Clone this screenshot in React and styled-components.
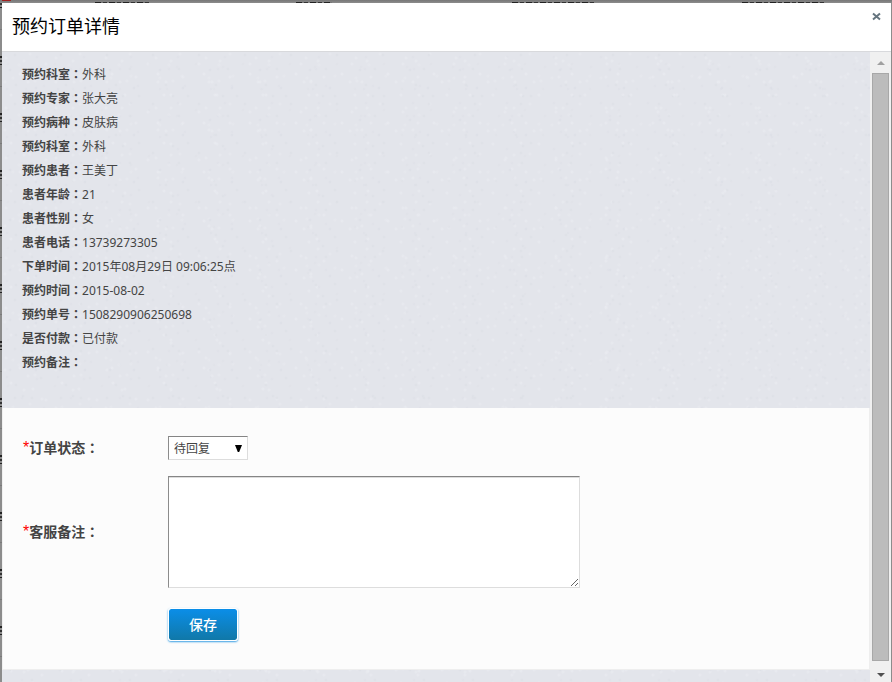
import React, { useState } from 'react';
import styled, { createGlobalStyle } from 'styled-components';

const GlobalStyle = createGlobalStyle`
  * {
    box-sizing: border-box;
  }

  body {
    margin: 0;
    color: #444;
    font-family: "Noto Sans", "Noto Sans CJK SC", sans-serif;
    font-size: 12px;
    line-height: 24px;
  }
`;

const Backdrop = styled.div`
  display: flex;
  height: 100vh;
  padding: 3px 1px 0 2px;
  background-color: #8c8c8c;
  background-image:
    linear-gradient(#a02020, #a02020),
    repeating-linear-gradient(90deg, #222 0 6px, #777 6px 8px, #333 8px 12px, #888 12px 14px),
    repeating-linear-gradient(90deg, #222 0 6px, #777 6px 8px, #333 8px 12px, #888 12px 14px),
    repeating-linear-gradient(90deg, #222 0 6px, #777 6px 8px, #333 8px 12px, #888 12px 14px),
    repeating-linear-gradient(90deg, #222 0 6px, #777 6px 8px, #333 8px 12px, #888 12px 14px),
    linear-gradient(#777, #8c8c8c),
    linear-gradient(#8c8c8c 0 4px, #222 4px 6px, #8c8c8c 6px 8px, #333 8px 10px, #8c8c8c 10px 12px, #222 12px 13px, #8c8c8c 13px 34px, #7a7a7a 34px 35px, #8c8c8c 35px);
  background-repeat: no-repeat, no-repeat, no-repeat, no-repeat, no-repeat, no-repeat, repeat-y;
  background-size: 9px 1px, 56px 1px, 36px 1px, 82px 1px, 82px 1px, 100% 3px, 2px 57px;
  background-position: 2px 0, 95px 2px, 296px 2px, 512px 2px, 742px 2px, 0 0, 0 52px;
`;

const Dialog = styled.section`
  flex: 1;
  min-width: 0;
  display: flex;
  flex-direction: column;
  background: #fff;
`;

const DialogHeader = styled.header`
  display: flex;
  justify-content: space-between;
  align-items: flex-start;
  padding: 0 6px 2px 10px;
  border-bottom: 1px solid #d8d9dc;
`;

const Title = styled.h1`
  margin: 0;
  color: #000;
  font-size: 18px;
  font-weight: 400;
  line-height: 46px;
`;

const CloseButton = styled.button`
  display: flex;
  margin-top: 5px;
  padding: 4px;
  border: none;
  background: none;
  cursor: pointer;
`;

const DialogBody = styled.div`
  flex: 1;
  min-height: 0;
  display: flex;
`;

// paper-like grain: faint light and dark specks on tiles of about 50px
const specks = [
  [4, 6, '#e9ebf0'], [13, 3, '#dde0e6'], [22, 9, '#e9ebf0'], [35, 5, '#dfe1e8'],
  [44, 12, '#e9ebf0'], [8, 18, '#dcdfe6'], [18, 22, '#eaecf1'], [30, 17, '#dde0e6'],
  [40, 25, '#e9ebf0'], [3, 30, '#e9ebf0'], [14, 33, '#dde0e6'], [26, 30, '#e9ebf0'],
  [34, 36, '#dcdfe6'], [42, 34, '#dfe1e8'], [9, 43, '#eaecf1'], [21, 44, '#dde0e6'],
  [31, 43, '#e9ebf0'], [39, 44, '#dde0e6'], [6, 12, '#e0e2e8'], [27, 24, '#e7e9ee'],
  [17, 13, '#e7e9ee'], [37, 15, '#e0e2e8'], [11, 26, '#e7e9ee'], [24, 37, '#e0e2e8'],
  [5, 37, '#dfe1e8'], [28, 2, '#e8eaef'], [33, 29, '#e8eaef'], [20, 17, '#dfe1e8'],
].map(([x, y, color]) => `radial-gradient(circle at ${x}px ${y}px, ${color}, transparent 2px)`);

const Content = styled.div`
  flex: 1;
  min-width: 0;
  overflow-y: auto;
  scrollbar-width: none;
  background-color: #e3e5eb;
  background-image: ${specks.join(', ')};
  background-size: 50px 50px, 46px 49px, 49px 47px, 47px 46px, 51px 48px;
`;

const Details = styled.dl`
  margin: 0;
  padding: 11px 20px 33px;
`;

const DetailRow = styled.div`
  display: flex;
  height: 24px;
`;

const DetailLabel = styled.dt`
  font-weight: 700;
`;

const DetailValue = styled.dd`
  margin: 0;
`;

// this face centres the fullwidth colon in its cell
const Colon = styled.span`
  font-family: "Noto Sans CJK TC", sans-serif;
  line-height: 1;
`;

const Form = styled.form`
  display: grid;
  grid-template-columns: 145px 1fr;
  row-gap: 16px;
  align-items: center;
  justify-items: start;
  padding: 28px 20px;
  border-left: 1px solid #f0f0f0;
  border-right: 1px solid #eee;
  border-bottom: 1px solid #eee;
  background: #fcfcfc;
`;

const FieldLabel = styled.label`
  font-size: 14px;
  font-weight: 700;
`;

const Required = styled.span`
  color: #f00;
  font-family: "Liberation Sans", sans-serif;
  font-size: 16px;
  font-weight: 400;
  line-height: 1;
`;

const SelectBox = styled.div`
  display: grid;
  align-items: center;

  > * {
    grid-area: 1 / 1;
  }

  svg {
    justify-self: end;
    margin-right: 6px;
    pointer-events: none;
  }
`;

const Select = styled.select`
  appearance: none;
  width: 80px;
  height: 24px;
  padding: 0 5px;
  border: 1px solid;
  border-color: #858585 #ddd #ddd #8c8c8c;
  border-radius: 0;
  background: #fff;
  color: #444;
  font: inherit;
`;

const TextArea = styled.textarea`
  display: block;
  width: 412px;
  max-width: 100%;
  height: 112px;
  padding: 4px;
  border: 1px solid;
  border-color: #858585 #ddd #ddd #8c8c8c;
  background: #fff;
  box-shadow: inset 0 1px 0 #ddd;
  color: #444;
  font: inherit;
  resize: both;
`;

const SaveButton = styled.button`
  grid-column: 2;
  margin-top: 4px;
  width: 70px;
  height: 33px;
  padding: 0 0 2px;
  border: 1px solid #fff;
  border-radius: 3px;
  background: linear-gradient(#0b8ee8, #1078a8) padding-box;
  box-shadow: 0 1px 2px #3a9fe4;
  color: #fff;
  font-family: inherit;
  font-size: 14px;
  font-weight: 500;
  cursor: pointer;
`;

const ScrollBar = styled.div`
  display: flex;
  flex-direction: column;
  width: 21px;
  padding: 0 2px;
  background: #f0f0f0;
`;

const ScrollArrow = styled.button`
  display: flex;
  align-items: ${props => props.$align || 'center'};
  justify-content: center;
  height: 21px;
  padding: 5px 0;
  border: none;
  background: none;
`;

const ScrollThumb = styled.div`
  flex: 1;
  border: 1px solid #a8a8a8;
  background: #bcbcbc;
`;

const details = [
  ['预约科室', '外科'],
  ['预约专家', '张大亮'],
  ['预约病种', '皮肤病'],
  ['预约科室', '外科'],
  ['预约患者', '王美丁'],
  ['患者年龄', '21'],
  ['患者性别', '女'],
  ['患者电话', '13739273305'],
  ['下单时间', '2015年08月29日 09:06:25点'],
  ['预约时间', '2015-08-02'],
  ['预约单号', '1508290906250698'],
  ['是否付款', '已付款'],
  ['预约备注', ''],
];

const App = () => {
  const [status, setStatus] = useState('pending');
  const [remark, setRemark] = useState('');

  return (
    <>
      <GlobalStyle />
      <Backdrop>
        <Dialog role="dialog" aria-labelledby="dialog-title">
          <DialogHeader>
            <Title id="dialog-title">预约订单详情</Title>
            <CloseButton type="button" aria-label="关闭">
              <svg width="9" height="9" viewBox="0 0 9 9">
                <path d="M1 1.5 L8 7.5 M8 1.5 L1 7.5" stroke="#66757f" strokeWidth="2" />
              </svg>
            </CloseButton>
          </DialogHeader>

          <DialogBody>
            <Content>
              <Details>
                {details.map(([label, value], index) => (
                  <DetailRow key={index}>
                    <DetailLabel>{label}<Colon>：</Colon></DetailLabel>
                    <DetailValue>{value}</DetailValue>
                  </DetailRow>
                ))}
              </Details>

              <Form onSubmit={(e) => e.preventDefault()}>
                <FieldLabel htmlFor="status">
                  <Required>*</Required>订单状态<Colon>：</Colon>
                </FieldLabel>
                <SelectBox>
                  <Select id="status" value={status} onChange={(e) => setStatus(e.target.value)}>
                    <option value="pending">待回复</option>
                    <option value="replied">已回复</option>
                  </Select>
                  <svg width="7" height="7" viewBox="0 0 7 7">
                    <path d="M0 0 H7 L4.2 7 H2.8 Z" fill="#000" />
                  </svg>
                </SelectBox>

                <FieldLabel htmlFor="remark">
                  <Required>*</Required>客服备注<Colon>：</Colon>
                </FieldLabel>
                <TextArea id="remark" value={remark} onChange={(e) => setRemark(e.target.value)} />

                <SaveButton type="submit">保存</SaveButton>
              </Form>
            </Content>

            <ScrollBar>
              <ScrollArrow type="button" aria-label="向上滚动">
                <svg width="8" height="4" viewBox="0 0 8 4">
                  <path d="M0 4 L4 0 L8 4 Z" fill="#a0a0a0" />
                </svg>
              </ScrollArrow>
              <ScrollThumb />
              <ScrollArrow type="button" $align="flex-end" aria-label="向下滚动">
                <svg width="8" height="4" viewBox="0 0 8 4">
                  <path d="M0 0 L4 4 L8 0 Z" fill="#505050" />
                </svg>
              </ScrollArrow>
            </ScrollBar>
          </DialogBody>
        </Dialog>
      </Backdrop>
    </>
  );
};

export default App;
